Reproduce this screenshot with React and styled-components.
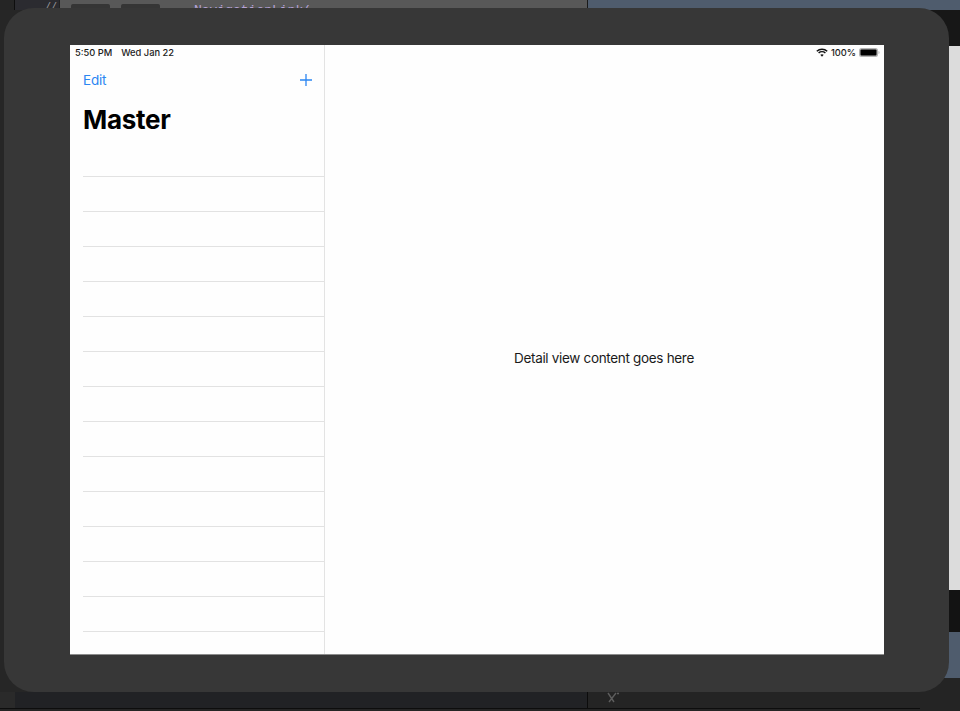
import React from 'react';
import styled, { createGlobalStyle } from 'styled-components';

const GlobalStyle = createGlobalStyle`
  html, body {
    margin: 0;
    padding: 0;
    background: #222222;
  }
`;

const Stage = styled.div`
  position: relative;
  width: 960px;
  height: 711px;
  overflow: hidden;
  padding: 8px 11px 19px 4px;
  box-sizing: border-box;
  font-family: Inter, "Liberation Sans", sans-serif;
`;

/* the desktop that shows around the simulator */
const Desktop = styled.div`
  position: absolute;
  inset: 0;
  display: grid;
  grid-template-columns: 1fr 40px;
  grid-template-rows: 10px 1fr 19px;
`;

const EditorBar = styled.div`
  grid-column: 1 / 3;
  display: flex;
  height: 10px;
`;

const SideGutter = styled.div`
  width: 14px;
  background: #252525;
`;

const GutterTab = styled.div`
  width: 45px;
  background: #2b2b30;
  border-left: 1px solid #0e0e0e;
  color: #9a9a9a;
  font: 10px/16px "Liberation Mono", monospace;
  padding-left: 30px;
  box-sizing: border-box;
`;

const EditorTitle = styled.div`
  width: 529px;
  background: #585858;
  border-left: 1px solid #222;
  border-right: 1px solid #1a1a1a;
  display: flex;
  align-items: flex-start;
  box-sizing: border-box;
  padding: 4px 0 0 11px;
  gap: 11px;
`;

const TitlePill = styled.div`
  width: ${(p) => p.$w}px;
  height: 6px;
  background: #353535;
  border-radius: 2px;
`;

const CodeText = styled.span`
  margin: 0 0 0 23px;
  font: 13px/14px "Liberation Mono", monospace;
  color: #b5a2d6;
  white-space: nowrap;
`;

const BlueStrip = styled.div`
  flex: 1;
  background: #4f5c6d;
`;

const DesktopFill = styled.div`
  grid-column: 1;
  grid-row: 2;
  background: #262626;
`;

const RightEdge = styled.div`
  grid-column: 2;
  grid-row: 2 / 4;
  display: grid;
  grid-template-rows: 36px 544px 42px 46px 1fr;
`;

const RightBand = styled.div`
  background: ${(p) => p.$color};
`;

const BottomBar = styled.div`
  grid-column: 1;
  grid-row: 3;
  background: #242424;
`;

const BottomRow = styled.div`
  display: flex;
  align-items: flex-start;
  height: 17px;
  box-sizing: border-box;
  border-bottom: 1px solid #0d0d0d;
`;

const BottomLeft = styled.div`
  width: 588px;
  height: 16px;
  background: #212225;
  border-left: 15px solid #2a2a2a;
  border-right: 1px solid #0c0c0c;
  box-sizing: border-box;
`;

const CursorMark = styled.svg`
  margin: 0 0 0 18px;
  width: 14px;
  height: 12px;
`;

const Bezel = styled.div`
  position: relative;
  height: 684px;
  background: #373737;
  border-radius: 30px;
  padding: 37px 65px 37px 66px;
  box-sizing: border-box;
`;

const Screen = styled.div`
  position: relative;
  height: 610px;
  background: #fefefe;
  border-bottom: 1px solid #8c8c8c;
  box-sizing: border-box;
  display: flex;
  overflow: hidden;
`;

const StatusBar = styled.div`
  position: absolute;
  top: 0;
  left: 0;
  right: 0;
  height: 15px;
  padding: 0 4px 0 5px;
  display: flex;
  align-items: center;
  justify-content: space-between;
  font-size: 9.3px;
  font-weight: 500;
  color: #1c1c1c;
`;

const StatusGroup = styled.div`
  display: flex;
  align-items: center;
  gap: ${(p) => p.$gap}px;
`;

const Master = styled.div`
  width: 255px;
  flex-shrink: 0;
  border-right: 1px solid #e3e3e3;
  box-sizing: border-box;
  padding-top: 15px;
  overflow: hidden;
`;

const NavBar = styled.div`
  height: 40px;
  padding: 0 12px 0 13px;
  display: flex;
  align-items: center;
  justify-content: space-between;
  color: #2b86f2;
  font-size: 13.5px;
  letter-spacing: -0.2px;
`;

const Title = styled.h1`
  margin: 0;
  padding-left: 13px;
  height: 41px;
  font-size: 26px;
  line-height: 40px;
  letter-spacing: -0.3px;
  font-weight: 700;
  color: #000;
`;

const RowList = styled.div`
  margin: 0 0 0 13px;
  padding-top: 1px;
`;

const Row = styled.div`
  height: 35px;
  box-sizing: border-box;
  border-bottom: 1px solid #e2e2e2;
  margin-right: -1px;
`;

const Detail = styled.div`
  flex: 1;
  display: flex;
  align-items: center;
  justify-content: center;
  padding: 16px 1px 0 0;
  font-size: 13.5px;
  letter-spacing: -0.32px;
  color: #1a1a1a;
`;

const WifiIcon = () => (
  <svg width="12" height="9" viewBox="0 0 12 9" fill="none" stroke="#111" strokeWidth="1.5">
    <path d="M0.8 3.2C3.7 0.6 8.3 0.6 11.2 3.2" />
    <path d="M2.6 5C4.5 3.4 7.5 3.4 9.4 5" />
    <path d="M6 8.8L4.3 6.8C5.3 6 6.7 6 7.7 6.8Z" fill="#111" stroke="none" />
  </svg>
);

const BatteryIcon = () => (
  <svg width="21" height="9" viewBox="0 0 21 9">
    <rect x="0" y="0" width="19" height="9" rx="2.5" fill="#b4b4b4" />
    <rect x="1.5" y="1.5" width="16" height="6" rx="1" fill="#000" />
    <path d="M19.5 3v3c.7-.2 1-.8 1-1.5s-.3-1.3-1-1.5z" fill="#b4b4b4" />
  </svg>
);

const PlusIcon = () => (
  <svg width="12" height="12" viewBox="0 0 12 12" stroke="#2b86f2" strokeWidth="1.3">
    <path d="M6 0v12M0 6h12" />
  </svg>
);

const rows = Array.from({ length: 14 }, (_, i) => i);

export default function App() {
  return (
    <>
      <GlobalStyle />
      <Stage>
        <Desktop>
          <EditorBar>
            <SideGutter />
            <GutterTab>//</GutterTab>
            <EditorTitle>
              <TitlePill $w={39} />
              <TitlePill $w={39} />
              <CodeText>NavigationLink(</CodeText>
            </EditorTitle>
            <BlueStrip />
          </EditorBar>
          <DesktopFill />
          <RightEdge>
            <RightBand $color="#171717" />
            <RightBand $color="#dcdcdc" />
            <RightBand $color="#131313" />
            <RightBand $color="#4f5c6d" />
            <RightBand $color="#242424" />
          </RightEdge>
          <BottomBar>
            <BottomRow>
              <BottomLeft />
              <CursorMark viewBox="0 0 14 12" fill="none" stroke="#5d5d5d" strokeWidth="1.4">
                <path d="M2 1l6 9M10 1L3 10M11 1.5h2" />
              </CursorMark>
            </BottomRow>
          </BottomBar>
        </Desktop>
        <Bezel>
          <Screen>
            <StatusBar>
              <StatusGroup $gap={9}>
                <span>5:50 PM</span>
                <span>Wed Jan 22</span>
              </StatusGroup>
              <StatusGroup $gap={3}>
                <WifiIcon />
                <span>100%</span>
                <BatteryIcon />
              </StatusGroup>
            </StatusBar>
            <Master>
              <NavBar>
                <span>Edit</span>
                <PlusIcon />
              </NavBar>
              <Title>Master</Title>
              <RowList>
                {rows.map((r) => (
                  <Row key={r} />
                ))}
              </RowList>
            </Master>
            <Detail>Detail view content goes here</Detail>
          </Screen>
        </Bezel>
      </Stage>
    </>
  );
}
